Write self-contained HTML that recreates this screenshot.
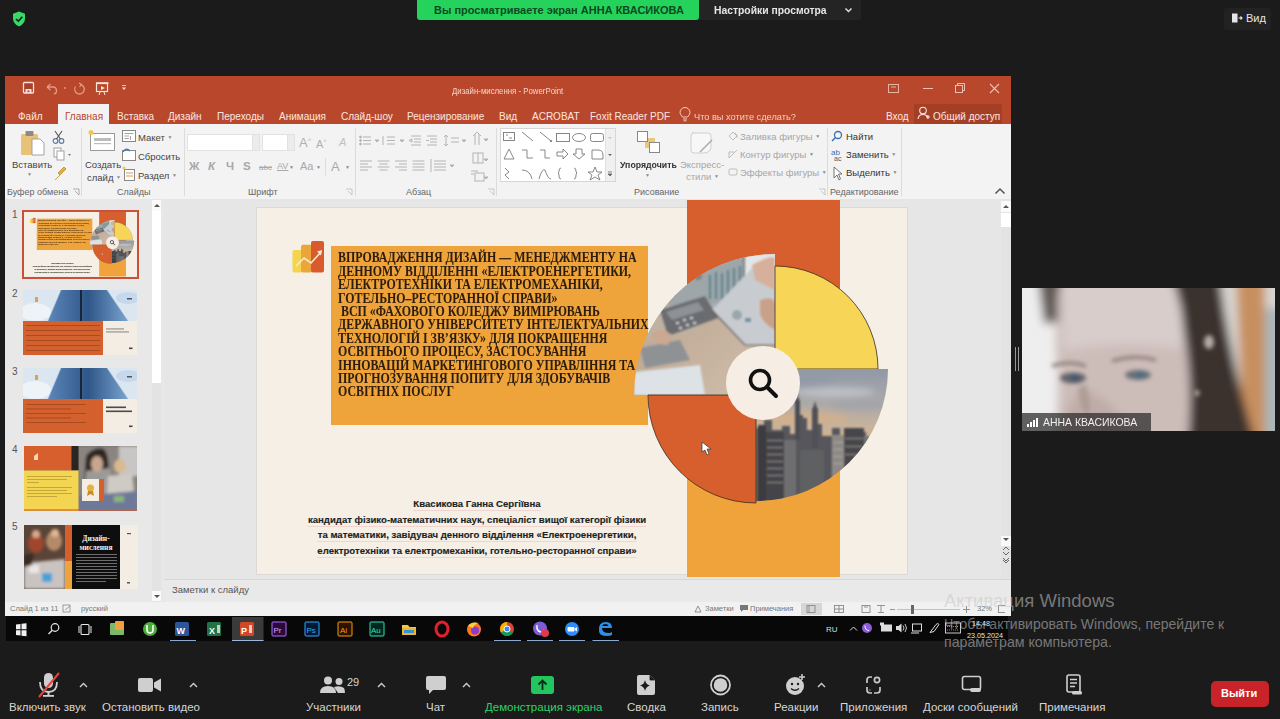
<!DOCTYPE html>
<html><head><meta charset="utf-8">
<style>
*{margin:0;padding:0;box-sizing:border-box}
html,body{width:1280px;height:719px;overflow:hidden;background:#1b1b1b;font-family:"Liberation Sans",sans-serif}
.a{position:absolute}
.t{position:absolute;white-space:nowrap;line-height:1}
</style></head><body>
<!-- ZOOM TOP -->
<div class="a" style="left:417px;top:0;width:282px;height:20px;background:#25d35c;border-radius:0 0 3px 3px"></div>
<div class="t" style="left:434px;top:5px;font-size:11px;font-weight:bold;color:#0b4a1f">Вы просматриваете экран АННА КВАСИКОВА</div>
<div class="a" style="left:699px;top:0;width:162px;height:20px;background:#242424;border-radius:0 0 3px 0"></div>
<div class="t" style="left:714px;top:5px;font-size:11px;font-weight:bold;color:#e6e6e6;transform:scaleX(0.94);transform-origin:0 0">Настройки просмотра</div>

<svg class="a" style="left:844px;top:7px" width="9" height="6"><path d="M1.5,1.5 L4.5,4.5 L7.5,1.5" fill="none" stroke="#ddd" stroke-width="1.5"/></svg>
<!-- PPT WINDOW -->
<div class="a" style="left:5px;top:76px;width:1006px;height:48px;background:#b9472b"></div>
<div class="a" style="left:5px;top:124px;width:1006px;height:75px;background:#f3f3f3"></div>
<div class="a" style="left:58px;top:104px;width:51px;height:21px;background:#f3f3f3"></div>

<!-- title bar -->
<svg class="a" style="left:20px;top:80px" width="115" height="17" viewBox="20 80 115 17">
<rect x="23.5" y="82.5" width="10" height="10.5" rx="1" fill="#a8402a" stroke="#f5e3dc" stroke-width="1.3"/><rect x="25.5" y="89" width="6" height="4" fill="#f5e3dc"/><rect x="27.5" y="90.5" width="2" height="1.6" fill="#a8402a"/>
<path d="M47,87 L50.5,84 M47,87 L50.5,90 M47,87 H53 Q56.5,87 56.5,91 Q56.5,93.5 54,94" fill="none" stroke="#e49a84" stroke-width="1.3"/>
<circle cx="65" cy="88" r="0.9" fill="#e49a84"/>
<path d="M80.5,84.5 A4.8,4.8 0 1 1 75.5,86.5" fill="none" stroke="#e49a84" stroke-width="1.3"/><path d="M79,83 L81.5,84.5 L79.5,87" fill="none" stroke="#e49a84" stroke-width="1.2"/>
<rect x="96.5" y="83.5" width="11" height="8" fill="none" stroke="#f5e3dc" stroke-width="1.2"/><path d="M96,83 H108.5" stroke="#f5e3dc" stroke-width="1.6"/><path d="M101,86 L105,88 L101,90 Z" fill="#f5e3dc"/><path d="M100,92 L99,95 M104,92 L105,95" stroke="#f5e3dc" stroke-width="1"/>
<path d="M122,87.5 H126 L124,90 Z" fill="#f5e3dc"/><path d="M122,85.5 H126" stroke="#f5e3dc" stroke-width="0.8"/>
</svg>
<div class="t" style="left:451.5px;top:86.5px;font-size:8.5px;color:#f3d5cb;transform:scaleX(0.92);transform-origin:0 0">Дизайн-мислення - PowerPoint</div>
<svg class="a" style="left:884px;top:82px" width="120" height="14" viewBox="0 0 120 14">
<rect x="4.5" y="2.5" width="10" height="8" fill="none" stroke="#e8b3a3" stroke-width="1"/><path d="M7,5 L12,5" stroke="#e8b3a3"/>
<path d="M39,6.5 L49,6.5" stroke="#eebfb0" stroke-width="1"/>
<rect x="71.5" y="3.5" width="7" height="7" fill="none" stroke="#eebfb0" stroke-width="1"/><path d="M73.5,3.5 V1.5 H80.5 V8.5 H78.5" fill="none" stroke="#eebfb0" stroke-width="1"/>
<path d="M106,2 L115,11 M115,2 L106,11" stroke="#eebfb0" stroke-width="1.1"/>
</svg>
<!-- tabs -->
<div class="t" style="left:18px;top:111.5px;font-size:10px;color:#fbe7e0">Файл</div>
<div class="t" style="left:65px;top:111.5px;font-size:10px;color:#b9472b">Главная</div>
<div class="t" style="left:117px;top:111.5px;font-size:10px;color:#fbe7e0">Вставка</div>
<div class="t" style="left:168px;top:111.5px;font-size:10px;color:#fbe7e0">Дизайн</div>
<div class="t" style="left:217px;top:111.5px;font-size:10px;color:#fbe7e0">Переходы</div>
<div class="t" style="left:279px;top:111.5px;font-size:10px;color:#fbe7e0">Анимация</div>
<div class="t" style="left:341px;top:111.5px;font-size:10px;color:#fbe7e0">Слайд-шоу</div>
<div class="t" style="left:407px;top:111.5px;font-size:10px;color:#fbe7e0">Рецензирование</div>
<div class="t" style="left:499px;top:111.5px;font-size:10px;color:#fbe7e0">Вид</div>
<div class="t" style="left:532px;top:111.5px;font-size:10px;color:#fbe7e0">ACROBAT</div>
<div class="t" style="left:590px;top:111.5px;font-size:10px;color:#fbe7e0">Foxit Reader PDF</div>
<svg class="a" style="left:679px;top:107px" width="12" height="15" viewBox="0 0 12 15"><path d="M3.5,10 Q1,7.5 1,5.5 A5,5 0 0 1 11,5.5 Q11,7.5 8.5,10 Z M4,12 H8 M4.5,13.8 H7.5" fill="none" stroke="#f2cdc2" stroke-width="1"/></svg>
<div class="t" style="left:694px;top:111.5px;font-size:9.6px;color:#f2cdc2;transform:scaleX(0.96);transform-origin:0 0">Что вы хотите сделать?</div>
<div class="t" style="left:886px;top:112px;font-size:10px;color:#fbe7e0">Вход</div>
<div class="a" style="left:914px;top:104px;width:88px;height:20px;background:#a43f26"></div>
<svg class="a" style="left:917px;top:106px" width="13" height="14" viewBox="0 0 13 14"><circle cx="6" cy="4.5" r="3.3" fill="none" stroke="#fbe7e0" stroke-width="1.1"/><path d="M1,13 Q1.5,8.5 6,8.5 Q10.5,8.5 11,13 M9,11 H13 M11,9 V13" fill="none" stroke="#fbe7e0" stroke-width="1.1"/></svg>
<div class="t" style="left:933px;top:111.5px;font-size:10px;color:#fbe7e0">Общий доступ</div>

<!-- ribbon -->
<div class="a" style="left:81px;top:128px;width:1px;height:68px;background:#dcdcdc"></div>
<div class="a" style="left:184px;top:128px;width:1px;height:68px;background:#dcdcdc"></div>
<div class="a" style="left:355px;top:128px;width:1px;height:68px;background:#dcdcdc"></div>
<div class="a" style="left:496px;top:128px;width:1px;height:68px;background:#dcdcdc"></div>
<div class="a" style="left:827px;top:128px;width:1px;height:68px;background:#dcdcdc"></div>
<div class="a" style="left:901px;top:128px;width:1px;height:68px;background:#dcdcdc"></div>
<!-- clipboard -->
<svg class="a" style="left:19px;top:129px" width="28" height="28" viewBox="0 0 28 28">
<rect x="2" y="5" width="17" height="21" rx="1.5" fill="#e9c27a"/><rect x="6.5" y="2" width="8" height="5" rx="1" fill="#8b8b8b"/><path d="M13,10 H21 L25,14 V26 H13 Z" fill="#fff" stroke="#9a9a9a" stroke-width="0.9"/>
</svg>
<div class="t" style="left:12px;top:160px;font-size:9.5px;color:#444">Вставить</div>
<div class="t" style="left:27px;top:172px;font-size:7px;color:#666"><span style="font-size:5px;vertical-align:2px;color:#8a8a8a">▼</span></div>
<svg class="a" style="left:51px;top:129px" width="20" height="55" viewBox="0 0 20 55">
<circle cx="4.5" cy="12" r="2.3" fill="none" stroke="#5a7fa8" stroke-width="1.2"/><circle cx="10.5" cy="12" r="2.3" fill="none" stroke="#5a7fa8" stroke-width="1.2"/><path d="M5.5,10 L11,2 M9.5,10 L4,2" stroke="#555" stroke-width="1.1"/>
<rect x="3" y="19" width="7" height="9" fill="#fff" stroke="#999" stroke-width="0.9"/><rect x="6" y="22" width="7" height="9" fill="#fff" stroke="#999" stroke-width="0.9"/><path d="M17,25 L20,25 L18.5,27 Z" fill="#777"/>
<path d="M4,51 L9,46 M7,44 L13,38 L15,40 L9,46 Z" fill="#e2b04a" stroke="#c08a2a" stroke-width="0.8"/>
</svg>
<div class="t" style="left:7px;top:188px;font-size:9px;color:#666">Буфер обмена</div>
<svg class="a" style="left:72px;top:188px" width="8" height="8"><path d="M1,1 H7 V7 M3,3 L7,7" fill="none" stroke="#999" stroke-width="0.8"/></svg>
<!-- slides -->
<svg class="a" style="left:87px;top:129px" width="30" height="24" viewBox="0 0 30 24">
<rect x="3.5" y="4.5" width="24" height="17" fill="#fff" stroke="#9a9a9a"/><rect x="7" y="9" width="17" height="3" fill="#bdbdbd"/><rect x="7" y="14" width="17" height="1.2" fill="#bdbdbd"/><circle cx="4" cy="3.5" r="2.5" fill="#f2c94c"/>
</svg>
<div class="t" style="left:85px;top:160px;font-size:9.5px;color:#444">Создать</div>
<div class="t" style="left:87px;top:173px;font-size:9.5px;color:#444">слайд <span style="font-size:5px;vertical-align:2px;color:#8a8a8a">▼</span></div>
<svg class="a" style="left:122px;top:130px" width="14" height="52" viewBox="0 0 14 52">
<rect x="0.5" y="0.5" width="13" height="11" fill="#fff" stroke="#888"/><path d="M2.5,3.5 H11.5 M2.5,6 H7 M2.5,8.5 H7 M8.5,6 V10" stroke="#999" stroke-width="0.9"/>
<rect x="0.5" y="20.5" width="13" height="10" fill="#fff" stroke="#888"/><path d="M1,22 Q4,17 8,21" fill="none" stroke="#3a7bc8" stroke-width="1.4"/>
<rect x="2.5" y="39.5" width="10" height="11" fill="#fff" stroke="#888"/><path d="M4,43 H11 M4,46 H11" stroke="#d98a3a" stroke-width="0.9"/><circle cx="2" cy="38" r="1.5" fill="#f2c94c"/>
</svg>
<div class="t" style="left:138px;top:133px;font-size:9.5px;color:#444">Макет <span style="font-size:5px;vertical-align:2px;color:#8a8a8a">▼</span></div>
<div class="t" style="left:138px;top:152px;font-size:9.5px;color:#444">Сбросить</div>
<div class="t" style="left:138px;top:171px;font-size:9.5px;color:#444">Раздел <span style="font-size:5px;vertical-align:2px;color:#8a8a8a">▼</span></div>
<div class="t" style="left:117px;top:188px;font-size:9px;color:#666">Слайды</div>
<!-- font -->
<div class="a" style="left:187px;top:134px;width:66px;height:17px;background:#fff;border:1px solid #e2e2e2"></div>
<div class="a" style="left:252px;top:134px;width:8px;height:17px;background:#ececec;border:1px solid #e2e2e2"></div>
<div class="a" style="left:262px;top:134px;width:26px;height:17px;background:#fff;border:1px solid #e2e2e2"></div>
<div class="a" style="left:287px;top:134px;width:8px;height:17px;background:#ececec;border:1px solid #e2e2e2"></div>
<div class="t" style="left:299px;top:136px;font-size:13px;color:#b0b0b0">A<sup style="font-size:6px">˄</sup></div>
<div class="t" style="left:316px;top:138px;font-size:11px;color:#b0b0b0">A<sup style="font-size:6px">˅</sup></div>
<div class="t" style="left:339px;top:137px;font-size:11px;color:#c0c0c0;font-style:italic">A</div>
<div class="t" style="left:189px;top:161px;font-size:11.5px;font-weight:bold;color:#a8a8a8">Ж</div>
<div class="t" style="left:208px;top:161px;font-size:11.5px;font-weight:bold;font-style:italic;color:#a8a8a8">К</div>
<div class="t" style="left:226px;top:161px;font-size:11.5px;font-weight:bold;color:#a8a8a8">Ч</div>
<div class="t" style="left:243px;top:161px;font-size:11.5px;font-weight:bold;color:#a8a8a8">S</div>
<div class="t" style="left:259px;top:164px;font-size:8px;color:#a8a8a8;text-decoration:line-through">abc</div>
<div class="t" style="left:277px;top:162px;font-size:9px;color:#a8a8a8;text-decoration:underline">AV</div>
<div class="t" style="left:289px;top:165px;font-size:6px;color:#b8b8b8"><span style="font-size:5px;vertical-align:2px;color:#8a8a8a">▼</span></div>
<div class="t" style="left:300px;top:161px;font-size:11px;color:#a8a8a8">Aa</div>
<div class="t" style="left:316px;top:165px;font-size:6px;color:#b8b8b8"><span style="font-size:5px;vertical-align:2px;color:#8a8a8a">▼</span></div>
<div class="a" style="left:325px;top:158px;width:1px;height:18px;background:#ddd"></div>
<div class="t" style="left:331px;top:160px;font-size:13px;color:#a8a8a8">A</div>
<div class="t" style="left:345px;top:165px;font-size:6px;color:#b8b8b8"><span style="font-size:5px;vertical-align:2px;color:#8a8a8a">▼</span></div>
<div class="t" style="left:248px;top:188px;font-size:9px;color:#666">Шрифт</div>
<svg class="a" style="left:345px;top:188px" width="8" height="8"><path d="M1,1 H7 V7 M3,3 L7,7" fill="none" stroke="#bbb" stroke-width="0.8"/></svg>
<!-- paragraph -->
<svg class="a" style="left:358px;top:131px" width="138" height="58" viewBox="0 0 138 58">
<g stroke="#b4b4b4" stroke-width="1" fill="none">
<path d="M5,6 H13 M5,9.5 H13 M5,13 H13"/><circle cx="2.5" cy="6" r="0.9" fill="#b4b4b4"/><circle cx="2.5" cy="9.5" r="0.9" fill="#b4b4b4"/><circle cx="2.5" cy="13" r="0.9" fill="#b4b4b4"/>
<path d="M29,6 H37 M29,9.5 H37 M29,13 H37 M25,5 V14"/>
<path d="M53,5 H63 M56,8 H63 M56,11 H63 M53,14 H63 M51,9.5 L54,8 L54,11 Z"/>
<path d="M69,5 H79 M72,8 H79 M72,11 H79 M69,14 H79 M68,9.5 L71,9.5"/>
<path d="M88,4 V15 M86,6 L88,4 L90,6 M86,13 L88,15 L90,13 M93,7 H101 M93,11 H101"/>
<path d="M117,3 V14 M121,3 V14 M115,5 L119,1 L123,5"/><path d="M126,8 L130,8 L128,10 Z" fill="#b4b4b4"/><path d="M17,9 L21,9 L19,11 Z M42,9 L46,9 L44,11 Z M104,9 L108,9 L106,11 Z M126,28 L130,28 L128,30 Z M126,46 L130,46 L128,48 Z" fill="#b4b4b4"/>
<rect x="115" y="22" width="10" height="10"/><path d="M120,22 V32"/>
<rect x="117" y="42" width="9" height="8"/><path d="M113,40 H120 M113,43 H116"/>
<path d="M2,30 H14 M2,33 H10 M2,36 H14 M2,39 H10"/>
<path d="M19.5,30 H31.5 M21.5,33 H29.5 M19.5,36 H31.5 M21.5,39 H29.5"/>
<path d="M37,30 H49 M41,33 H49 M37,36 H49 M41,39 H49"/>
<path d="M54.5,30 H66.5 M54.5,33 H66.5 M54.5,36 H66.5 M54.5,39 H66.5"/>
<path d="M76,30 H88 M76,33 H88 M76,36 H88 M76,39 H88 M73,28 V41" /><path d="M92,34 L96,34 L94,36 Z" fill="#b4b4b4"/>
</g>
</svg>
<div class="t" style="left:406px;top:188px;font-size:9px;color:#666">Абзац</div>
<svg class="a" style="left:487px;top:188px" width="8" height="8"><path d="M1,1 H7 V7 M3,3 L7,7" fill="none" stroke="#bbb" stroke-width="0.8"/></svg>
<!-- drawing -->
<div class="a" style="left:500px;top:128px;width:116px;height:54px;background:#fff;border:1px solid #d6d6d6"></div>
<div class="a" style="left:605px;top:129px;width:10px;height:52px;background:#f0f0f0;border-left:1px solid #e0e0e0"></div>
<svg class="a" style="left:500px;top:128px" width="116" height="54" viewBox="0 0 116 54">
<g stroke="#7a7a7a" stroke-width="0.9" fill="none">
<rect x="3.5" y="4.5" width="11" height="8"/><path d="M6,7 H8 M9,10 H12"/>
<path d="M22,4 L33,13"/><path d="M40,4 L51,13"/><circle cx="51" cy="13" r="0.8" fill="#7a7a7a"/>
<rect x="56.5" y="5.5" width="13" height="8"/><ellipse cx="79" cy="9.5" rx="6.5" ry="4"/><rect x="90.5" y="5.5" width="13" height="8" rx="2"/>
<path d="M4,31 L9,21 L14,31 Z"/><path d="M22,22 H27 V30 H33"/><path d="M40,22 H45 V30 H50"/>
<path d="M57,24 H63 V21 L68,26 L63,31 V28 H57 Z"/><path d="M76,21 H82 V26 H85 L79,31 L73,26 H76 Z"/><path d="M92,22 H98 Q103,22 103,27 V31 H92 Z"/>
<path d="M5,40 L9,44 L5,47 L9,51"/><path d="M22,42 Q30,42 32,51"/><path d="M39,51 Q42,40 45,42 Q48,51 51,51"/>
<path d="M61,40 Q59,40 59,43 V44 L58,45 L59,46 V48 Q59,51 61,51"/><path d="M74,40 Q76,40 76,43 V44 L77,45 L76,46 V48 Q76,51 74,51"/>
<path d="M95,39 L97,44 L102,44 L98,47 L100,52 L95,49 L90,52 L92,47 L88,44 L93,44 Z"/>
</g>
<path d="M108,9 L112,9 L110,11 Z" fill="#c8c8c8"/><path d="M108,26 L112,26 L110,28 Z" fill="#666"/><path d="M108,44 H112 M108,46 L112,46 L110,48 Z" stroke="#666" stroke-width="0.8" fill="#666"/>
</svg>
<svg class="a" style="left:636px;top:130px" width="26" height="24" viewBox="0 0 26 24"><rect x="9" y="8" width="10" height="10" fill="#e8c97a"/><rect x="1.5" y="1.5" width="10" height="10" fill="#fff" stroke="#888"/><rect x="13.5" y="12.5" width="10" height="10" fill="#fff" stroke="#888"/></svg>
<div class="t" style="left:620px;top:160px;font-size:9.5px;color:#333;font-weight:bold;transform:scaleX(0.92);transform-origin:0 0">Упорядочить</div>
<div class="t" style="left:645px;top:173px;font-size:6px;color:#666"><span style="font-size:5px;vertical-align:2px;color:#8a8a8a">▼</span></div>
<svg class="a" style="left:688px;top:130px" width="26" height="26" viewBox="0 0 26 26"><path d="M4,3 H20 Q23,3 23,6 V16 Q23,23 16,23 H6 Q3,23 3,20 V6 Q3,3 6,3" fill="#f7f7f7" stroke="#cfcfcf"/><path d="M12,22 L24,10" stroke="#aaa" stroke-width="1.5"/></svg>
<div class="t" style="left:680px;top:160px;font-size:9.5px;color:#a6a6a6">Экспресс-</div>
<div class="t" style="left:686px;top:172px;font-size:9.5px;color:#a6a6a6">стили <span style="font-size:5px;vertical-align:2px;color:#8a8a8a">▼</span></div>
<svg class="a" style="left:727px;top:130px" width="12" height="48" viewBox="0 0 12 48"><g fill="none" stroke="#b8b8b8" stroke-width="0.9"><path d="M2,6 L6,2 L10,6 L6,10 Z M8,3 Q11,5 10,8"/><path d="M2,28 L10,20 M2,28 V22 H7"/><rect x="2" y="39" width="8" height="6" rx="1"/></g></svg>
<div class="t" style="left:740px;top:132px;font-size:9.5px;color:#a6a6a6">Заливка фигуры <span style="font-size:5px;vertical-align:2px;color:#8a8a8a">▼</span></div>
<div class="t" style="left:740px;top:149.5px;font-size:9.5px;color:#a6a6a6">Контур фигуры <span style="font-size:5px;vertical-align:2px;color:#8a8a8a">▼</span></div>
<div class="t" style="left:740px;top:167.5px;font-size:9.5px;color:#a6a6a6">Эффекты фигуры <span style="font-size:5px;vertical-align:2px;color:#8a8a8a">▼</span></div>
<div class="t" style="left:634px;top:188px;font-size:9px;color:#666">Рисование</div>
<svg class="a" style="left:818px;top:188px" width="8" height="8"><path d="M1,1 H7 V7 M3,3 L7,7" fill="none" stroke="#bbb" stroke-width="0.8"/></svg>
<!-- editing -->
<svg class="a" style="left:831px;top:130px" width="14" height="52" viewBox="0 0 14 52"><circle cx="7" cy="5" r="3.5" fill="none" stroke="#3a6fb0" stroke-width="1.3"/><path d="M4.5,7.5 L1,11" stroke="#3a6fb0" stroke-width="1.5"/>
<text x="0" y="25" font-size="8" fill="#3a6fb0" font-family="Liberation Sans">ab</text><text x="3" y="31" font-size="7" fill="#555" font-family="Liberation Sans">ac</text>
<path d="M3,37 V48 L6,45 L8,50 L9.5,49 L7.5,44 H11 Z" fill="#fff" stroke="#666" stroke-width="0.9"/></svg>
<div class="t" style="left:846px;top:132px;font-size:9.5px;color:#333">Найти</div>
<div class="t" style="left:846px;top:149.5px;font-size:9.5px;color:#333">Заменить <span style="font-size:5px;vertical-align:2px;color:#8a8a8a">▼</span></div>
<div class="t" style="left:846px;top:167.5px;font-size:9.5px;color:#333">Выделить <span style="font-size:5px;vertical-align:2px;color:#8a8a8a">▼</span></div>
<div class="t" style="left:830px;top:188px;font-size:9px;color:#666">Редактирование</div>
<svg class="a" style="left:994px;top:187px" width="12" height="8"><path d="M1.5,6.5 L6,2 L10.5,6.5" fill="none" stroke="#555" stroke-width="1.5"/></svg>
<!-- slide panel -->
<div class="a" style="left:5px;top:199px;width:159px;height:403px;background:#e8e8e8"></div>
<div class="a" style="left:164px;top:199px;width:847px;height:380px;background:#e6e6e6"></div>
<div class="a" style="left:164px;top:579px;width:847px;height:23px;background:#e9e9e9;border-top:1px solid #d6d6d6"></div>
<div class="a" style="left:5px;top:602px;width:1006px;height:14px;background:#f1f1f1"></div>

<!-- slide panel contents -->
<div class="a" style="left:152px;top:199px;width:9px;height:403px;background:#e3e3e3"></div>
<div class="a" style="left:152px;top:200px;width:9px;height:11px;background:#fafafa"></div>
<svg class="a" style="left:153px;top:203px" width="8" height="5"><path d="M1,4 L4,1 L7,4 Z" fill="#555"/></svg>
<div class="a" style="left:152px;top:211px;width:9px;height:172px;background:#fff"></div>
<div class="a" style="left:152px;top:591px;width:9px;height:10px;background:#fafafa"></div>
<svg class="a" style="left:153px;top:594px" width="8" height="5"><path d="M1,1 L4,4 L7,1 Z" fill="#555"/></svg>
<div class="t" style="left:12px;top:210px;font-size:10px;color:#555">1</div>
<div class="t" style="left:12px;top:289px;font-size:10px;color:#555">2</div>
<div class="t" style="left:12px;top:367px;font-size:10px;color:#555">3</div>
<div class="t" style="left:12px;top:445px;font-size:10px;color:#555">4</div>
<div class="t" style="left:12px;top:522px;font-size:10px;color:#555">5</div>
<!-- thumb1 -->
<div class="a" style="left:22px;top:210px;width:117px;height:69px;border:2px solid #c9503a;background:#f5ede2;overflow:hidden">
<div class="a" style="left:0;top:0;width:649px;height:369px;transform:scale(0.1752);transform-origin:0 0;overflow:hidden">
<div class="a" style="left:-258px;top:-208px;width:1280px;height:719px">
<!-- slide -->
<div class="a" style="left:257px;top:208px;width:650px;height:366px;background:#f5efe6;box-shadow:0 0 0 1px #dcdad6"></div>

<!-- slide content -->
<svg class="a" style="left:290px;top:240px" width="36" height="34" viewBox="0 0 36 34">
<rect x="2.5" y="10" width="10" height="22.5" rx="2" fill="#f3d44c"/>
<rect x="11" y="4.8" width="11" height="27.7" rx="2" fill="#eba53b"/>
<rect x="21" y="1" width="13" height="31.5" rx="2" fill="#d95a2c"/>
<polyline points="6,26 14,18 21,23 31,12" fill="none" stroke="#fbe9d3" stroke-width="1.6"/>
<polygon points="32,10 27,11.5 31,15.5" fill="#fbe9d3"/>
</svg>
<div class="a" style="left:331px;top:246px;width:317px;height:179px;background:#eea43b"></div>
<div class="a" id="t_ttl" style="white-space:nowrap;left:338px;top:251.4px;width:340px;font-family:'Liberation Serif',serif;font-weight:bold;font-size:13.6px;line-height:13.4px;color:#2e1d0e;-webkit-text-stroke:0.05px #2e1d0e;transform-origin:0 0;transform:scaleX(0.876)">ВПРОВАДЖЕННЯ ДИЗАЙН — МЕНЕДЖМЕНТУ НА<br>ДЕННОМУ ВІДДІЛЕННІ «ЕЛЕКТРОЕНЕРГЕТИКИ,<br>ЕЛЕКТРОТЕХНІКИ ТА ЕЛЕКТРОМЕХАНІКИ,<br>ГОТЕЛЬНО–РЕСТОРАННОЇ СПРАВИ»<br>&nbsp;ВСП «ФАХОВОГО КОЛЕДЖУ ВИМІРЮВАНЬ<br>ДЕРЖАВНОГО УНІВЕРСИТЕТУ ІНТЕЛЕКТУАЛЬНИХ<br>ТЕХНОЛОГІЙ І ЗВ’ЯЗКУ» ДЛЯ ПОКРАЩЕННЯ<br>ОСВІТНЬОГО ПРОЦЕСУ, ЗАСТОСУВАННЯ<br>ІННОВАЦІЙ МАРКЕТИНГОВОГО УПРАВЛІННЯ ТА<br>ПРОГНОЗУВАННЯ ПОПИТУ ДЛЯ ЗДОБУВАЧІВ<br>ОСВІТНІХ ПОСЛУГ</div>
<div class="a" style="left:687px;top:200px;width:153px;height:190px;background:#d65f2d"></div>
<div class="a" style="left:687px;top:390px;width:153px;height:187px;background:#f0a33b"></div>
<svg class="a" style="left:620px;top:240px" width="280" height="275" viewBox="620 240 280 275">
<defs>
<clipPath id="t_cq1"><path d="M775,395 L634,395 A141,141 0 0 1 775,254 Z"/></clipPath>
<clipPath id="t_cq3"><path d="M756,369 L888,369 A132,132 0 0 1 756,501 Z"/></clipPath>
<filter id="t_sb"><feGaussianBlur stdDeviation="1.2"/></filter>
<filter id="t_sb2"><feGaussianBlur stdDeviation="3"/></filter>
<linearGradient id="t_sky" x1="0" y1="0" x2="0" y2="1">
<stop offset="0" stop-color="#8d97a6"/><stop offset="0.25" stop-color="#a9a8aa"/><stop offset="0.45" stop-color="#c9b39c"/><stop offset="0.55" stop-color="#d7ae82"/><stop offset="1" stop-color="#c9a27a"/>
</linearGradient>
<linearGradient id="t_tbl" x1="0" y1="0" x2="1" y2="1">
<stop offset="0" stop-color="#b59e88"/><stop offset="1" stop-color="#d2c0ae"/>
</linearGradient>
</defs>
<g clip-path="url(#t_cq1)">
<rect x="630" y="250" width="150" height="150" fill="url(#t_tbl)"/>
<g filter="url(#t_sb2)">
<rect x="630" y="250" width="150" height="60" fill="#a7adb0"/>
<rect x="740" y="250" width="40" height="40" fill="#e4e5e8"/>
<path d="M630,300 L690,290 L700,330 L630,345 Z" fill="#c0b2a2"/>
</g>
<g filter="url(#t_sb)">
<path d="M662,262 L744,254 L744,302 L668,306 Z" fill="#9ea6a9"/><path d="M744,254 V302" stroke="#333" stroke-width="1"/>
<g stroke="#3f7f8a" stroke-width="1.8"><path d="M710,299 V275 M716,299 V272 M722,299 V273 M728,299 V270 M734,299 V268 M740,299 V266"/></g>
<circle cx="698" cy="276" r="4" fill="#7a8488"/>
<path d="M660,310 L705,296 L718,318 L668,336 Z" fill="#6a6c70"/>
<path d="M666,312 L698,302 L704,310 L672,320 Z" fill="#8e9296"/>
<g fill="#cfd2d4"><rect x="676" y="322" width="3" height="2"/><rect x="683" y="319" width="3" height="2"/><rect x="690" y="317" width="3" height="2"/><rect x="679" y="327" width="3" height="2"/><rect x="686" y="324" width="3" height="2"/><rect x="693" y="322" width="3" height="2"/></g>
<path d="M712,310 L752,268 L775,266 L775,345 L745,345 Z" fill="#c8ccd0"/>
<path d="M712,310 L745,345 L775,345" fill="none" stroke="#555" stroke-width="1.2"/>
<circle cx="737" cy="315" r="5" fill="#9aa6aa"/><rect x="745" y="318" width="6" height="4" fill="#7090a0"/>
<path d="M752,265 Q770,255 775,258 V290 Q765,285 755,280 Z" fill="#d6b09a"/>
<path d="M760,300 Q775,295 775,305 V330 Q765,325 760,315 Z" fill="#c9a088"/>
<path d="M640,348 L680,340 L690,360 L645,368 Z" fill="#8f9295"/>
<path d="M634,372 L700,365 L705,395 L634,395 Z" fill="#dde2e6"/>
<path d="M650,336 Q660,325 672,335 L668,345 Q655,345 650,336 Z" fill="#caa892"/>
</g>
</g>
<path d="M775,369 L775,266 A103,103 0 0 1 878,369 Z" fill="#f7d557" stroke="#3a2a1a" stroke-width="0.8"/>
<g clip-path="url(#t_cq3)">
<rect x="750" y="365" width="140" height="140" fill="url(#t_sky)"/>
<g filter="url(#t_sb2)"><ellipse cx="830" cy="395" rx="40" ry="6" fill="#c7c9cf" opacity="0.7"/><ellipse cx="800" cy="385" rx="30" ry="8" fill="#9aa0ac" opacity="0.6"/></g>
<g filter="url(#t_sb)">
<path d="M756,430 H770 V425 H780 V432 H790 V420 H800 V430 H812 V428 H822 V440 H835 V435 H850 V432 H870 V440 H890 V505 H756 Z" fill="#55565a"/>
<rect x="813" y="418" width="6" height="40" fill="#4a4b50"/><rect x="820" y="422" width="5" height="30" fill="#5c5d60"/>
<rect x="760" y="435" width="22" height="70" fill="#3e3f44"/>
<rect x="786" y="445" width="14" height="60" fill="#66676a"/>
<rect x="842" y="436" width="14" height="50" fill="#8a8784"/><rect x="856" y="432" width="18" height="50" fill="#4b4c50"/>
<rect x="800" y="460" width="30" height="45" fill="#6e6e70"/>
<g fill="#b9b3a8" opacity="0.7"><rect x="763" y="442" width="16" height="1"/><rect x="763" y="450" width="16" height="1"/><rect x="763" y="458" width="16" height="1"/><rect x="763" y="466" width="16" height="1"/><rect x="763" y="474" width="16" height="1"/><rect x="844" y="445" width="10" height="1"/><rect x="844" y="452" width="10" height="1"/><rect x="844" y="459" width="10" height="1"/></g>
</g>
</g>
<path d="M756,395 L756,503 A108,108 0 0 1 648,395 Z" fill="#d65f2d" stroke="#3a2a1a" stroke-width="0.8"/>
<circle cx="763" cy="383" r="37" fill="#f6eee4"/>
<circle cx="760" cy="380" r="9.5" fill="none" stroke="#111" stroke-width="3.6"/>
<line x1="767" y1="387" x2="776" y2="396" stroke="#111" stroke-width="4" stroke-linecap="round"/>
<path d="M702,442 L702,452 L705,450 L707,455 L709,454 L707,449 L711,449 Z" fill="#fff" stroke="#333" stroke-width="0.7"/>
</svg>
<div class="a" style="left:260px;top:496px;width:434px;text-align:center;font-family:'Liberation Sans',sans-serif;font-weight:bold;font-size:9.6px;line-height:15.6px;color:#1f1f1f;-webkit-text-stroke:0.15px #1f1f1f;text-decoration:underline;text-decoration-color:rgba(230,150,150,0.3);text-underline-offset:2.5px;text-decoration-thickness:1px">Квасикова Ганна Сергіївна<br>кандидат фізико-математичних наук, спеціаліст вищої категорії фізики<br>та математики, завідувач денного відділення «Електроенергетики,<br>електротехніки та електромеханіки, готельно-ресторанної справи»</div>
</div></div></div>
<!-- thumb2 --><svg class="a" style="left:23px;top:290px" width="114" height="65" viewBox="0 0 114 65">
<defs><linearGradient id="gl2" x1="0" y1="0" x2="1" y2="0"><stop offset="0" stop-color="#5d87b9"/><stop offset="0.5" stop-color="#2f5688"/><stop offset="1" stop-color="#7aa3cf"/></linearGradient></defs>
<rect width="114" height="65" fill="#f4ede4"/>
<rect width="114" height="31" fill="#dbe6f1"/>
<ellipse cx="12" cy="22" rx="16" ry="9" fill="#eef3f8"/><ellipse cx="105" cy="8" rx="12" ry="6" fill="#c6d8ec"/>
<path d="M25,31 L38,0 H84 L105,31 Z" fill="url(#gl2)"/>
<path d="M38,0 L25,31 M84,0 L105,31" stroke="#9fbbd8" stroke-width="0.6"/>
<rect x="57" y="0" width="2" height="31" fill="#182638"/>
<rect x="12" y="7" width="3" height="5" fill="#e3a04a"/>
<rect x="104" y="8" width="5" height="1.5" fill="#555"/>
<rect x="0" y="31" width="80" height="34" fill="#d4602e"/>
<rect x="3" y="35" width="74" height="0.9" fill="#7a3418" opacity="0.55"/><rect x="3" y="40" width="74" height="0.9" fill="#7a3418" opacity="0.55"/><rect x="3" y="45" width="74" height="0.9" fill="#7a3418" opacity="0.55"/><rect x="3" y="50" width="74" height="0.9" fill="#7a3418" opacity="0.55"/><rect x="3" y="55" width="74" height="0.9" fill="#7a3418" opacity="0.55"/><rect x="3" y="60" width="74" height="0.9" fill="#7a3418" opacity="0.55"/><rect x="83" y="38.5" width="18" height="0.9" fill="#777"/><rect x="83" y="41.5" width="23" height="0.9" fill="#777"/><rect x="106" y="57.5" width="3.5" height="1.6" fill="#444"/>
</svg>
<!-- thumb3 --><svg class="a" style="left:23px;top:368px" width="114" height="65" viewBox="0 0 114 65">
<defs><linearGradient id="gl3" x1="0" y1="0" x2="1" y2="0"><stop offset="0" stop-color="#5d87b9"/><stop offset="0.5" stop-color="#2f5688"/><stop offset="1" stop-color="#7aa3cf"/></linearGradient></defs>
<rect width="114" height="65" fill="#f4ede4"/>
<rect width="114" height="31" fill="#dbe6f1"/>
<ellipse cx="12" cy="22" rx="16" ry="9" fill="#eef3f8"/><ellipse cx="105" cy="8" rx="12" ry="6" fill="#c6d8ec"/>
<path d="M25,31 L38,0 H84 L105,31 Z" fill="url(#gl3)"/>
<path d="M38,0 L25,31 M84,0 L105,31" stroke="#9fbbd8" stroke-width="0.6"/>
<rect x="57" y="0" width="2" height="31" fill="#182638"/>
<rect x="12" y="7" width="3" height="5" fill="#e3a04a"/>
<rect x="104" y="8" width="5" height="1.5" fill="#555"/>
<rect x="0" y="31" width="80" height="34" fill="#d4602e"/>
<rect x="3" y="36.0" width="60" height="0.9" fill="#7a3418" opacity="0.55"/><rect x="3" y="40.5" width="45" height="0.9" fill="#7a3418" opacity="0.55"/><rect x="3" y="45.0" width="60" height="0.9" fill="#7a3418" opacity="0.55"/><rect x="3" y="49.5" width="45" height="0.9" fill="#7a3418" opacity="0.55"/><rect x="3" y="54.0" width="60" height="0.9" fill="#7a3418" opacity="0.55"/><rect x="83" y="38.5" width="20" height="1.6" fill="#4a4a4a"/><rect x="83" y="42.5" width="26" height="1.6" fill="#4a4a4a"/><rect x="106" y="57.5" width="3.5" height="1.6" fill="#444"/>
</svg>
<!-- thumb4 -->
<svg class="a" style="left:24px;top:446px" width="113" height="65" viewBox="0 0 113 65">
<defs><filter id="tb4"><feGaussianBlur stdDeviation="1.6"/></filter></defs>
<rect width="113" height="65" fill="#77716c"/>
<g filter="url(#tb4)">
<rect x="54" y="0" width="60" height="65" fill="#8a8580"/>
<rect x="95" y="0" width="20" height="30" fill="#c8c6c4"/>
<path d="M62,10 Q70,0 80,3 Q86,10 84,30 L70,40 L60,35 Z" fill="#2e2624"/>
<path d="M62,25 L86,22 L88,65 L58,65 Z" fill="#9c9a98"/>
<ellipse cx="73" cy="18" rx="6" ry="8" fill="#c9a690"/>
<ellipse cx="96" cy="20" rx="6" ry="7" fill="#d9b98f"/>
<path d="M84,30 L108,28 L112,65 L82,65 Z" fill="#cfcac4"/>
<path d="M55,50 L113,45 V65 H55 Z" fill="#6e7898"/>
<rect x="90" y="50" width="10" height="6" fill="#8cb57a"/>
</g>
<rect x="0" y="0" width="47.5" height="24.5" fill="#d65f2d"/>
<rect x="47.5" y="0" width="7" height="24.5" fill="#2a2522"/>
<rect x="0" y="24.5" width="54.5" height="40.5" fill="#f3d551"/>
<path d="M10,10 L14,7 V14 H10 Z" fill="#f7d6b0"/>
<g fill="#8a6a20" opacity="0.55"><rect x="3" y="30" width="45" height="0.8"/><rect x="3" y="33" width="40" height="0.8"/><rect x="3" y="36" width="12" height="0.8"/><rect x="3" y="41" width="45" height="0.8"/><rect x="3" y="44" width="40" height="0.8"/><rect x="3" y="47" width="45" height="0.8"/><rect x="3" y="50" width="30" height="0.8"/></g>
<rect x="0" y="63" width="113" height="2" fill="#d65f2d" opacity="0.6"/>
<rect x="58" y="33" width="17" height="22" fill="#f4ede4"/><rect x="75" y="33" width="5" height="22" fill="#d65f2d"/>
<circle cx="66.5" cy="42" r="3.5" fill="#e8b13a"/><path d="M64,45 L63,50 L66.5,48 L70,50 L69,45" fill="#c98a2a"/>
</svg>
<!-- thumb5 -->
<svg class="a" style="left:24px;top:525px" width="114" height="64" viewBox="0 0 114 64">
<defs><filter id="tb5"><feGaussianBlur stdDeviation="1.6"/></filter></defs>
<rect width="114" height="64" fill="#f4ede4"/>
<rect width="41" height="64" fill="#5a4438"/>
<g filter="url(#tb5)">
<ellipse cx="12" cy="18" rx="8" ry="10" fill="#a0442e"/>
<ellipse cx="30" cy="16" rx="8" ry="10" fill="#b58a6a"/>
<circle cx="12" cy="9" r="4" fill="#d9a888"/><circle cx="31" cy="8" r="4" fill="#e0b890"/>
<path d="M0,38 L41,34 V64 H0 Z" fill="#c9c4c2"/>
<rect x="18" y="48" width="10" height="9" fill="#4aa0d8"/>
<rect x="5" y="40" width="10" height="8" fill="#e9e6e4"/>
<path d="M0,30 L10,28 L8,40 L0,42 Z" fill="#3b2a24"/>
</g>
<rect x="41" y="0" width="7" height="36" fill="#d65f2d"/><rect x="41" y="36" width="7" height="28" fill="#f0a33b"/>
<rect x="48" y="0" width="48" height="64" fill="#0e0e0e"/>
<text x="72" y="16" font-size="7.5" font-weight="bold" fill="#eee" font-family="Liberation Serif" text-anchor="middle">Дизайн-</text>
<text x="72" y="25" font-size="7.5" font-weight="bold" fill="#eee" font-family="Liberation Serif" text-anchor="middle">мислення</text>
<g fill="#cfcfcf" opacity="0.55"><rect x="52" y="29" width="41" height="0.9"/><rect x="52" y="32" width="41" height="0.9"/><rect x="52" y="35" width="41" height="0.9"/><rect x="52" y="38" width="41" height="0.9"/><rect x="52" y="41" width="41" height="0.9"/><rect x="52" y="44" width="41" height="0.9"/><rect x="52" y="47" width="41" height="0.9"/><rect x="52" y="50" width="41" height="0.9"/><rect x="52" y="53" width="41" height="0.9"/><rect x="52" y="56" width="30" height="0.9"/></g>
<rect x="103" y="8" width="4" height="1.2" fill="#555"/><rect x="103" y="57" width="3" height="1.5" fill="#555"/>
</svg>
<!-- editor scrollbar -->
<div class="a" style="left:1001px;top:199px;width:10px;height:380px;background:#e3e3e3"></div>
<div class="a" style="left:1001px;top:201px;width:10px;height:11px;background:#fafafa"></div>
<svg class="a" style="left:1002px;top:204px" width="8" height="5"><path d="M1,4 L4,1 L7,4 Z" fill="#555"/></svg>
<div class="a" style="left:1001px;top:213px;width:10px;height:14px;background:#fff"></div>
<div class="a" style="left:1001px;top:536px;width:10px;height:10px;background:#fafafa"></div>
<svg class="a" style="left:1002px;top:537px" width="8" height="26"><path d="M1,1 L4,4 L7,1 Z" fill="#555"/><path d="M1,13 L4,10 L7,13 M1,15 L4,18 L7,15" fill="none" stroke="#666" stroke-width="1"/><path d="M1,21 L4,24 L7,21 M1,23 L4,26 L7,23" fill="none" stroke="#666" stroke-width="1"/></svg>
<div class="t" style="left:172px;top:585px;font-size:9.5px;color:#555">Заметки к слайду</div>
<!-- status bar -->
<div class="t" style="left:10px;top:605px;font-size:7.5px;color:#777">Слайд 1 из 11</div>
<svg class="a" style="left:62px;top:604px" width="10" height="9"><rect x="1" y="1" width="7" height="7" fill="none" stroke="#888" stroke-width="0.8"/><path d="M3,6 L8,2" stroke="#888" stroke-width="0.8"/></svg>
<div class="t" style="left:81px;top:605px;font-size:7.5px;color:#777">русский</div>
<svg class="a" style="left:693px;top:604px" width="10" height="9"><path d="M2,8 L5,2 L8,8 Z" fill="none" stroke="#888" stroke-width="0.9"/></svg>
<div class="t" style="left:705px;top:605px;font-size:7.5px;color:#777">Заметки</div>
<svg class="a" style="left:739px;top:604px" width="10" height="9"><path d="M1,1 H9 V6 H4 L2,8 V6 H1 Z" fill="#777"/></svg>
<div class="t" style="left:750px;top:605px;font-size:7.5px;color:#777">Примечания</div>
<div class="a" style="left:801px;top:603px;width:21px;height:12px;background:#d6d6d6"></div>
<svg class="a" style="left:805px;top:604px" width="200" height="11" viewBox="805 604 200 11"><g fill="none" stroke="#888" stroke-width="0.9"><rect x="807" y="605.5" width="8" height="7"/><path d="M809,605.5 V612.5"/><rect x="834.5" y="605.5" width="9" height="7"/><path d="M839,605.5 V612.5 M834.5,609 H843.5"/><rect x="862" y="605.5" width="8" height="7"/><path d="M864,607 H868"/><path d="M877,605.5 H885 M881,605.5 V612.5 M878,612.5 H884"/>
<path d="M890,609.5 H895"/><path d="M897,609.5 H960" stroke="#bbb"/><path d="M963,609.5 H970 M966.5,606 V613"/><rect x="998.5" y="605.5" width="8" height="7"/></g><rect x="911" y="605" width="3" height="9" fill="#666"/></svg>
<div class="t" style="left:977px;top:605px;font-size:7.5px;color:#777">32%</div>
<!-- slide -->
<div class="a" style="left:257px;top:208px;width:650px;height:366px;background:#f5efe6;box-shadow:0 0 0 1px #dcdad6"></div>

<!-- slide content -->
<svg class="a" style="left:290px;top:240px" width="36" height="34" viewBox="0 0 36 34">
<rect x="2.5" y="10" width="10" height="22.5" rx="2" fill="#f3d44c"/>
<rect x="11" y="4.8" width="11" height="27.7" rx="2" fill="#eba53b"/>
<rect x="21" y="1" width="13" height="31.5" rx="2" fill="#d95a2c"/>
<polyline points="6,26 14,18 21,23 31,12" fill="none" stroke="#fbe9d3" stroke-width="1.6"/>
<polygon points="32,10 27,11.5 31,15.5" fill="#fbe9d3"/>
</svg>
<div class="a" style="left:331px;top:246px;width:317px;height:179px;background:#eea43b"></div>
<div class="a" id="ttl" style="white-space:nowrap;left:338px;top:251.4px;width:340px;font-family:'Liberation Serif',serif;font-weight:bold;font-size:13.6px;line-height:13.4px;color:#2e1d0e;-webkit-text-stroke:0.05px #2e1d0e;transform-origin:0 0;transform:scaleX(0.876)">ВПРОВАДЖЕННЯ ДИЗАЙН — МЕНЕДЖМЕНТУ НА<br>ДЕННОМУ ВІДДІЛЕННІ «ЕЛЕКТРОЕНЕРГЕТИКИ,<br>ЕЛЕКТРОТЕХНІКИ ТА ЕЛЕКТРОМЕХАНІКИ,<br>ГОТЕЛЬНО–РЕСТОРАННОЇ СПРАВИ»<br>&nbsp;ВСП «ФАХОВОГО КОЛЕДЖУ ВИМІРЮВАНЬ<br>ДЕРЖАВНОГО УНІВЕРСИТЕТУ ІНТЕЛЕКТУАЛЬНИХ<br>ТЕХНОЛОГІЙ І ЗВ’ЯЗКУ» ДЛЯ ПОКРАЩЕННЯ<br>ОСВІТНЬОГО ПРОЦЕСУ, ЗАСТОСУВАННЯ<br>ІННОВАЦІЙ МАРКЕТИНГОВОГО УПРАВЛІННЯ ТА<br>ПРОГНОЗУВАННЯ ПОПИТУ ДЛЯ ЗДОБУВАЧІВ<br>ОСВІТНІХ ПОСЛУГ</div>
<div class="a" style="left:687px;top:200px;width:153px;height:190px;background:#d65f2d"></div>
<div class="a" style="left:687px;top:390px;width:153px;height:187px;background:#f0a33b"></div>
<svg class="a" style="left:620px;top:240px" width="280" height="275" viewBox="620 240 280 275">
<defs>
<clipPath id="cq1"><path d="M775,395 L634,395 A141,141 0 0 1 775,254 Z"/></clipPath>
<clipPath id="cq3"><path d="M756,369 L888,369 A132,132 0 0 1 756,501 Z"/></clipPath>
<filter id="sb"><feGaussianBlur stdDeviation="1.2"/></filter>
<filter id="sb2"><feGaussianBlur stdDeviation="3"/></filter>
<linearGradient id="sky" x1="0" y1="0" x2="0" y2="1">
<stop offset="0" stop-color="#8d97a6"/><stop offset="0.25" stop-color="#a9a8aa"/><stop offset="0.45" stop-color="#c9b39c"/><stop offset="0.55" stop-color="#d7ae82"/><stop offset="1" stop-color="#c9a27a"/>
</linearGradient>
<linearGradient id="tbl" x1="0" y1="0" x2="1" y2="1">
<stop offset="0" stop-color="#b59e88"/><stop offset="1" stop-color="#d2c0ae"/>
</linearGradient>
</defs>
<g clip-path="url(#cq1)">
<rect x="630" y="250" width="150" height="150" fill="url(#tbl)"/>
<g filter="url(#sb2)">
<rect x="630" y="250" width="150" height="60" fill="#a7adb0"/>
<rect x="740" y="250" width="40" height="40" fill="#e4e5e8"/>
<path d="M630,300 L690,290 L700,330 L630,345 Z" fill="#c0b2a2"/>
</g>
<g filter="url(#sb)">
<path d="M662,262 L744,254 L744,302 L668,306 Z" fill="#9ea6a9"/><path d="M744,254 V302" stroke="#333" stroke-width="1"/>
<g stroke="#3f7f8a" stroke-width="1.8"><path d="M710,299 V275 M716,299 V272 M722,299 V273 M728,299 V270 M734,299 V268 M740,299 V266"/></g>
<circle cx="698" cy="276" r="4" fill="#7a8488"/>
<path d="M660,310 L705,296 L718,318 L668,336 Z" fill="#6a6c70"/>
<path d="M666,312 L698,302 L704,310 L672,320 Z" fill="#8e9296"/>
<g fill="#cfd2d4"><rect x="676" y="322" width="3" height="2"/><rect x="683" y="319" width="3" height="2"/><rect x="690" y="317" width="3" height="2"/><rect x="679" y="327" width="3" height="2"/><rect x="686" y="324" width="3" height="2"/><rect x="693" y="322" width="3" height="2"/></g>
<path d="M712,310 L752,268 L775,266 L775,345 L745,345 Z" fill="#c8ccd0"/>
<path d="M712,310 L745,345 L775,345" fill="none" stroke="#555" stroke-width="1.2"/>
<circle cx="737" cy="315" r="5" fill="#9aa6aa"/><rect x="745" y="318" width="6" height="4" fill="#7090a0"/>
<path d="M752,265 Q770,255 775,258 V290 Q765,285 755,280 Z" fill="#d6b09a"/>
<path d="M760,300 Q775,295 775,305 V330 Q765,325 760,315 Z" fill="#c9a088"/>
<path d="M640,348 L680,340 L690,360 L645,368 Z" fill="#8f9295"/>
<path d="M634,372 L700,365 L705,395 L634,395 Z" fill="#dde2e6"/>
<path d="M650,336 Q660,325 672,335 L668,345 Q655,345 650,336 Z" fill="#caa892"/>
</g>
</g>
<path d="M775,369 L775,266 A103,103 0 0 1 878,369 Z" fill="#f7d557" stroke="#3a2a1a" stroke-width="0.8"/>
<g clip-path="url(#cq3)">
<rect x="750" y="365" width="140" height="140" fill="url(#sky)"/>
<g filter="url(#sb2)"><ellipse cx="835" cy="392" rx="40" ry="5" fill="#c9ccd2" opacity="0.7"/><ellipse cx="800" cy="380" rx="35" ry="9" fill="#8f97a5" opacity="0.6"/><ellipse cx="860" cy="405" rx="30" ry="6" fill="#9aa0aa" opacity="0.5"/><ellipse cx="800" cy="418" rx="50" ry="6" fill="#e0b080" opacity="0.6"/></g>
<g filter="url(#sb)">
<path d="M756,428 H764 V420 H772 V430 H782 V426 H790 V434 H798 V415 H803 V418 H807 V430 H815 V424 H822 V436 H832 V428 H840 V440 H852 V432 H866 V436 H880 V438 H890 V505 H756 Z" fill="#56575c"/>
<rect x="795" y="400" width="5" height="40" fill="#4c4d52"/><path d="M796,400 L797.5,394 L799,400 Z" fill="#4c4d52"/>
<rect x="812" y="408" width="6" height="40" fill="#505156"/><path d="M813,408 L815,401 L817,408 Z" fill="#505156"/>
<rect x="758" y="425" width="8" height="80" fill="#3a3b40"/>
<rect x="766" y="432" width="18" height="73" fill="#44454a"/>
<rect x="784" y="440" width="12" height="65" fill="#6e6e70"/>
<rect x="800" y="450" width="24" height="55" fill="#5f6062"/>
<rect x="832" y="435" width="12" height="60" fill="#8d8a86"/><rect x="844" y="428" width="20" height="60" fill="#46474c"/><rect x="864" y="436" width="12" height="50" fill="#777"/>
<g fill="#c2bbb0" opacity="0.55"><rect x="767" y="440" width="16" height="1"/><rect x="767" y="447" width="16" height="1"/><rect x="767" y="454" width="16" height="1"/><rect x="767" y="461" width="16" height="1"/><rect x="767" y="468" width="16" height="1"/><rect x="767" y="475" width="16" height="1"/><rect x="767" y="482" width="16" height="1"/><rect x="833" y="442" width="10" height="1"/><rect x="833" y="449" width="10" height="1"/><rect x="833" y="456" width="10" height="1"/><rect x="833" y="463" width="10" height="1"/><rect x="845" y="438" width="18" height="1"/><rect x="845" y="446" width="18" height="1"/><rect x="845" y="454" width="18" height="1"/></g>
</g>
</g>
</g>
<path d="M756,395 L756,503 A108,108 0 0 1 648,395 Z" fill="#d65f2d" stroke="#3a2a1a" stroke-width="0.8"/>
<circle cx="763" cy="383" r="37" fill="#f6eee4"/>
<circle cx="760" cy="380" r="9.5" fill="none" stroke="#111" stroke-width="3.6"/>
<line x1="767" y1="387" x2="776" y2="396" stroke="#111" stroke-width="4" stroke-linecap="round"/>
<path d="M702,442 L702,452 L705,450 L707,455 L709,454 L707,449 L711,449 Z" fill="#fff" stroke="#333" stroke-width="0.7"/>
</svg>
<div class="a" style="left:260px;top:496px;width:434px;text-align:center;font-family:'Liberation Sans',sans-serif;font-weight:bold;font-size:9.6px;line-height:15.6px;color:#1f1f1f;-webkit-text-stroke:0.15px #1f1f1f;text-decoration:underline;text-decoration-color:rgba(230,150,150,0.3);text-underline-offset:2.5px;text-decoration-thickness:1px">Квасикова Ганна Сергіївна<br>кандидат фізико-математичних наук, спеціаліст вищої категорії фізики<br>та математики, завідувач денного відділення «Електроенергетики,<br>електротехніки та електромеханіки, готельно-ресторанної справи»</div>
<!-- taskbar -->
<div class="a" style="left:6px;top:616px;width:1002px;height:25px;background:#080808"></div>
<svg class="a" style="left:5px;top:617px" width="1003" height="24" viewBox="5 616 1003 24"><path d="M16,623.5 L20.5,623 V628.3 H16 Z M21.5,622.8 L26.5,622.2 V628.3 H21.5 Z M16,629.2 H20.5 V634.5 L16,634 Z M21.5,629.2 H26.5 V635.3 L21.5,634.7 Z" fill="#f0f0f0"/><circle cx="55" cy="626.5" r="3.8" fill="none" stroke="#e8e8e8" stroke-width="1.2"/><path d="M52.3,629.2 L48.5,633" stroke="#e8e8e8" stroke-width="1.3"/><rect x="81" y="623.5" width="8" height="10" rx="1" fill="none" stroke="#e8e8e8" stroke-width="1.1"/><path d="M79,625 V632 M91,625 V632" stroke="#e8e8e8" stroke-width="1"/><rect x="170" y="639" width="26" height="1.6" fill="#8aa9cf"/><rect x="494" y="639" width="27" height="1.6" fill="#8aa9cf"/><rect x="527" y="639" width="26" height="1.6" fill="#8aa9cf"/><rect x="559" y="639" width="26" height="1.6" fill="#8aa9cf"/><rect x="592.5" y="639" width="26.5" height="1.6" fill="#8aa9cf"/><rect x="232" y="616" width="31.5" height="25" fill="#3a3a3a"/><rect x="232" y="639" width="31.5" height="1.6" fill="#9db8dc"/><rect x="110" y="622" width="14" height="12" rx="1" fill="#7cb86a"/><rect x="115" y="620" width="9" height="9" rx="1" fill="#f0a040"/><circle cx="150" cy="628" r="7" fill="#4bab3b"/><path d="M147,624 V629 Q147,632 150,632 Q153,632 153,629 V624" fill="none" stroke="#fff" stroke-width="1.6"/><rect x="175" y="621" width="14" height="14" rx="1.5" fill="#2b579a"/><text x="176.5" y="632.5" font-size="9" font-weight="bold" fill="#fff" font-family="Liberation Sans">W</text><rect x="207" y="621" width="14" height="14" rx="1.5" fill="#217346"/><text x="209" y="632.5" font-size="9" font-weight="bold" fill="#fff" font-family="Liberation Sans">X</text><rect x="217" y="624" width="3" height="8" fill="#fff" opacity="0.7"/><rect x="240" y="621" width="14" height="14" rx="1.5" fill="#d24726"/><text x="241" y="632.5" font-size="9" font-weight="bold" fill="#fff" font-family="Liberation Sans">P</text><rect x="249" y="624" width="3" height="8" fill="#fff" opacity="0.7"/><rect x="272" y="621" width="14" height="14" rx="1" fill="#2a0a3a" stroke="#b36bff" stroke-width="1"/><text x="273.5" y="631.5" font-size="8" fill="#d9a6ff" font-family="Liberation Sans">Pr</text><rect x="305" y="621" width="14" height="14" rx="1" fill="#001a33" stroke="#31a8ff" stroke-width="1"/><text x="306.5" y="631.5" font-size="8" fill="#31a8ff" font-family="Liberation Sans">Ps</text><rect x="338" y="621" width="14" height="14" rx="1" fill="#2b1300" stroke="#ff9a00" stroke-width="1"/><text x="340" y="631.5" font-size="8" fill="#ff9a00" font-family="Liberation Sans">Ai</text><rect x="370" y="621" width="14" height="14" rx="1" fill="#00261f" stroke="#2fe0b5" stroke-width="1"/><text x="371" y="631.5" font-size="8" fill="#2fe0b5" font-family="Liberation Sans">Au</text><path d="M402,624 H408 L409.5,626 H416 V634 H402 Z" fill="#f4c542"/><rect x="402" y="627" width="14" height="7" fill="#e8b730"/><rect x="404" y="629" width="10" height="3" fill="#3b8fd9"/><ellipse cx="442" cy="628" rx="6" ry="7" fill="none" stroke="#e0202a" stroke-width="3"/><circle cx="474" cy="628.5" r="7" fill="#ff7a1a"/><circle cx="475" cy="629.5" r="4" fill="#8a3bd0"/><path d="M468,625 Q472,620 479,622 Q474,623 473,627" fill="#ffcf33"/><circle cx="507" cy="628" r="7" fill="#db4437"/><path d="M507,628 L513,631.5 A7,7 0 0 1 501,631.5 Z" fill="#0f9d58"/><path d="M507,628 L501,631.5 A7,7 0 0 1 507,621 Z" fill="#f4b400"/><circle cx="507" cy="628" r="3" fill="#4285f4" stroke="#fff" stroke-width="1"/><circle cx="540" cy="627.5" r="7" fill="#7d5cd6"/><path d="M537,624 Q536,630 541,631 Q544,631 544,628" fill="none" stroke="#fff" stroke-width="1.4"/><circle cx="545" cy="632" r="4" fill="#e0394a"/><circle cx="572" cy="628" r="7" fill="#2d8cff"/><rect x="567.5" y="626" width="7" height="4.5" rx="1" fill="#fff"/><path d="M575,627.5 L577,626 V630.5 L575,629 Z" fill="#fff"/><path d="M599,630 Q598,621 606,621 Q612,621 612,627 H602 Q602,632 609,632 Q611,632 612,631 V634 Q610,635 607,635 Q599,635 599,630 Z M602,625 H608.5 Q608,623 605.5,623 Q603,623 602,625 Z" fill="#2f8ee6"/><g transform="translate(0,-1.5)"><text x="826" y="632" font-size="8" fill="#ddd" font-family="Liberation Sans">RU</text><path d="M850,631 L853.5,627.5 L857,631" fill="none" stroke="#ddd" stroke-width="1"/><circle cx="867" cy="628.5" r="5" fill="#8e5cd9"/><path d="M865,626 Q865,631 869,631" fill="none" stroke="#fff" stroke-width="1"/><rect x="881" y="625" width="11" height="7" fill="#ddd"/><rect x="880" y="623" width="4" height="3" fill="#ddd"/><path d="M896,626.5 H898.5 L901.5,624 V633 L898.5,630.5 H896 Z" fill="#ddd"/><path d="M903,626 Q905,628.5 903,631 M905,624.5 Q908,628.5 905,632.5" fill="none" stroke="#ddd" stroke-width="0.9"/><rect x="912.5" y="624.5" width="9" height="7" fill="none" stroke="#ddd" stroke-width="1"/><path d="M911,633.5 H919" stroke="#ddd"/><path d="M930,633 L936,625 Q938,623 939,625 L934,632 Z" fill="none" stroke="#ddd" stroke-width="1"/><rect x="945.5" y="623.5" width="15" height="10" fill="none" stroke="#ddd" stroke-width="0.9"/><path d="M947,630.5 H959 M947,627 H959" stroke="#ddd" stroke-width="0.6" stroke-dasharray="1,1"/></g><text x="972" y="625" font-size="7.2" fill="#e6e6e6" font-family="Liberation Sans">14:48</text><text x="967" y="637" font-size="7.2" fill="#e6e6e6" font-family="Liberation Sans">23.05.2024</text></svg>
<!-- zoom UI -->
<svg class="a" style="left:10px;top:10px" width="18" height="18" viewBox="0 0 18 18"><path d="M9,1.5 L15,3.8 V8.5 Q15,13.5 9,16.5 Q3,13.5 3,8.5 V3.8 Z" fill="#3ad769"/><path d="M6,9 L8.3,11.2 L12.3,6.8" fill="none" stroke="#1b1b1b" stroke-width="1.6"/></svg>
<div class="a" style="left:1224px;top:8px;width:47px;height:22px;background:#222;border-radius:3px"></div>
<svg class="a" style="left:1231px;top:12px" width="12" height="12" viewBox="0 0 12 12"><rect x="1" y="1.5" width="5.5" height="9" fill="#e6e6e6"/><path d="M7.5,6 H11 M9.5,4.5 L11,6 L9.5,7.5" fill="none" stroke="#e6e6e6" stroke-width="1.1"/></svg>
<div class="t" style="left:1246px;top:13px;font-size:11px;color:#e6e6e6">Вид</div>
<!-- activation -->
<div class="t" style="left:944px;top:592px;font-size:18.5px;color:rgba(200,200,200,0.55)">Активация Windows</div>
<div class="t" style="left:944px;top:617px;font-size:14px;color:rgba(200,200,200,0.55)">Чтобы активировать Windows, перейдите к</div>
<div class="t" style="left:944px;top:635px;font-size:14.2px;color:rgba(200,200,200,0.55)">параметрам компьютера.</div>
<!-- video -->
<div class="a" style="left:1022px;top:288px;width:253px;height:143px;overflow:hidden;background:#e6e6e6">
<svg class="a" style="left:0;top:0" width="253" height="143" viewBox="0 0 253 143">
<defs><filter id="bl" x="-20%" y="-20%" width="140%" height="140%"><feGaussianBlur stdDeviation="5"/></filter><filter id="bl2"><feGaussianBlur stdDeviation="2"/></filter></defs>
<rect width="253" height="143" fill="#e9e9e9"/>
<g filter="url(#bl)">
<rect x="-10" y="-10" width="280" height="170" fill="#cdbdb9"/>
<path d="M-10,-10 H40 Q30,40 35,80 Q38,120 30,160 H-10 Z" fill="#efeeee"/>
<path d="M195,-10 H262 V160 H215 Z" fill="#d9d5d1"/>
<path d="M214,-10 H243 V160 H222 Z" fill="#c78f5f"/>
<path d="M243,20 H262 V160 H243 Z" fill="#aab8b8"/>
<path d="M150,-10 H198 Q205,60 235,160 H165 Q175,80 150,-10 Z" fill="#3b312d"/>
<path d="M40,-10 H150 Q165,30 160,60 Q100,50 42,62 Z" fill="#d8cdcb"/>
<path d="M16,-10 H40 Q34,10 36,34 L22,36 Z" fill="#5e5652"/>
<path d="M60,100 Q90,110 110,143 H40 Q45,115 60,100 Z" fill="#bfaca8"/>
</g>
<g filter="url(#bl2)">
<path d="M30,78 Q48,72 64,78" fill="none" stroke="#8a7874" stroke-width="3"/>
<path d="M90,73 Q112,66 134,72" fill="none" stroke="#8a7874" stroke-width="3"/>
<ellipse cx="51" cy="90" rx="13" ry="5.5" fill="#65646a"/>
<ellipse cx="116" cy="87" rx="13" ry="5" fill="#6a6e76"/>
<ellipse cx="53" cy="90" rx="4.5" ry="3.5" fill="#3f5670"/>
<ellipse cx="118" cy="87" rx="4.5" ry="3.5" fill="#4a6c84"/>
<ellipse cx="187" cy="54" rx="5" ry="7" fill="#b5aba6"/>
<circle cx="175" cy="105" r="2.5" fill="#c9c0b8"/>
<path d="M64,96 Q70,115 66,130 Q58,120 56,100 Z" fill="#a8958f" opacity="0.7"/>
</g>
</svg>
 <div class="a" style="left:0;top:125px;width:129px;height:18px;background:rgba(40,40,40,0.72)"></div>
 <svg class="a" style="left:4px;top:129px" width="14" height="11"><rect x="1" y="7" width="2" height="3" fill="#fff"/><rect x="4" y="5" width="2" height="5" fill="#fff"/><rect x="7" y="3" width="2" height="7" fill="#fff"/><rect x="10" y="1" width="2" height="9" fill="#fff"/></svg>
 <div class="t" style="left:21px;top:129px;font-size:11px;color:#f0f0f0;transform:scaleX(0.95);transform-origin:0 0">АННА КВАСИКОВА</div>
</div>
<div class="a" style="left:1015px;top:347px;width:1.2px;height:24px;background:#9a9a9a"></div>
<div class="a" style="left:1018px;top:347px;width:1.2px;height:24px;background:#9a9a9a"></div>

<!-- zoom bottom toolbar -->
<svg class="a" style="left:0;top:660px" width="1280" height="59" viewBox="0 660 1280 59">
<g fill="#cfcfcf">
<rect x="44" y="673" width="9" height="15" rx="4.5"/><path d="M40,682 Q40,692 48.5,692 Q57,692 57,682" fill="none" stroke="#cfcfcf" stroke-width="1.8"/><rect x="47.5" y="692" width="2" height="4"/><rect x="43" y="695" width="11" height="1.8"/>
</g>
<path d="M39,697 L59,673" stroke="#e0463e" stroke-width="2"/>
<path d="M80,687 L83.5,683.5 L87,687" fill="none" stroke="#cfcfcf" stroke-width="1.4"/>
<rect x="138" y="678" width="15" height="14" rx="2" fill="#cfcfcf"/><path d="M154,682.5 L161,678.5 V691.5 L154,687.5 Z" fill="#cfcfcf"/>
<path d="M190,687 L193.5,683.5 L197,687" fill="none" stroke="#cfcfcf" stroke-width="1.4"/>
<circle cx="328" cy="680.5" r="4" fill="#cfcfcf"/><path d="M320,693 Q320,686 328,686 Q336,686 336,693 Z" fill="#cfcfcf"/><circle cx="339" cy="681.5" r="3.5" fill="#cfcfcf"/><path d="M334,687 Q340,685 344,688 Q345,690 345,693 H338 Z" fill="#cfcfcf"/>
<path d="M378,687 L381.5,683.5 L385,687" fill="none" stroke="#cfcfcf" stroke-width="1.4"/>
<path d="M428,676 H444 Q446,676 446,678 V688 Q446,690 444,690 H433 L429,694 V690 H428 Q426,690 426,688 V678 Q426,676 428,676 Z" fill="#cfcfcf"/>
<path d="M463,687 L466.5,683.5 L470,687" fill="none" stroke="#cfcfcf" stroke-width="1.4"/>
<rect x="531" y="676" width="23" height="18" rx="3" fill="#22c55e"/><path d="M542.5,690 V681 M538.5,684.5 L542.5,680.5 L546.5,684.5" fill="none" stroke="#0d2a16" stroke-width="1.8"/>
<path d="M639,675 H650 L655,680 V693 Q655,695 653,695 H639 Q637,695 637,693 V677 Q637,675 639,675 Z" fill="#cfcfcf"/><path d="M645,680 Q645.8,684.5 650,685.5 Q645.8,686.5 645,691 Q644.2,686.5 640,685.5 Q644.2,684.5 645,680 Z" fill="#1b1b1b"/><path d="M650,675 V680 H655" fill="#1b1b1b" stroke="#1b1b1b" stroke-width="0.8"/>
<circle cx="720.5" cy="685" r="9.5" fill="none" stroke="#cfcfcf" stroke-width="1.8"/><circle cx="720.5" cy="685" r="6.8" fill="#cfcfcf"/>
<circle cx="795" cy="686" r="9" fill="#cfcfcf"/><circle cx="792" cy="684" r="1.2" fill="#1b1b1b"/><circle cx="798" cy="684" r="1.2" fill="#1b1b1b"/><path d="M791,688.5 Q795,692 799,688.5" fill="none" stroke="#1b1b1b" stroke-width="1.3"/><path d="M802,674 V680 M799,677 H805" stroke="#cfcfcf" stroke-width="1.5"/>
<path d="M818,687 L821.5,683.5 L825,687" fill="none" stroke="#cfcfcf" stroke-width="1.4"/>
<g fill="none" stroke="#c8c8c8" stroke-width="1.7"><path d="M867,683 V680 Q867,677 870,677 H872 M867,687 V690 Q867,693 870,693 H872 M874,693 H877 Q880,693 880,690 V687"/><circle cx="877" cy="680" r="2.6"/><circle cx="870" cy="690" r="0.1"/></g>
<rect x="962.5" y="676.5" width="18" height="13" rx="2" fill="none" stroke="#cfcfcf" stroke-width="1.6"/><rect x="970" y="688" width="11" height="4" rx="2" fill="#cfcfcf"/>
<rect x="1067" y="675" width="13" height="17" rx="2" fill="none" stroke="#cfcfcf" stroke-width="1.6"/><path d="M1070,679.5 H1077 M1070,683 H1077 M1070,686.5 H1075" stroke="#cfcfcf" stroke-width="1.3"/><rect x="1072" y="691" width="10" height="3.5" rx="1.5" fill="#cfcfcf"/>
</svg>
<div class="t" style="left:9px;top:701.5px;font-size:11.5px;color:#d6d6d6">Включить звук</div>
<div class="t" style="left:102px;top:701.5px;font-size:11.5px;color:#d6d6d6">Остановить видео</div>
<div class="t" style="left:347px;top:677px;font-size:11px;color:#d6d6d6">29</div>
<div class="t" style="left:306px;top:701.5px;font-size:11.5px;color:#d6d6d6">Участники</div>
<div class="t" style="left:426px;top:701.5px;font-size:11.5px;color:#d6d6d6">Чат</div>
<div class="t" style="left:485px;top:701.5px;font-size:11.5px;color:#2ed169">Демонстрация экрана</div>
<div class="t" style="left:627px;top:701.5px;font-size:11.5px;color:#d6d6d6">Сводка</div>
<div class="t" style="left:701px;top:701.5px;font-size:11.5px;color:#d6d6d6">Запись</div>
<div class="t" style="left:774px;top:701.5px;font-size:11.5px;color:#d6d6d6">Реакции</div>
<div class="t" style="left:840px;top:701.5px;font-size:11.5px;color:#d6d6d6">Приложения</div>
<div class="t" style="left:923px;top:701.5px;font-size:11.5px;color:#d6d6d6">Доски сообщений</div>
<div class="t" style="left:1039px;top:701.5px;font-size:11.5px;color:#d6d6d6">Примечания</div>
<div class="a" style="left:1211px;top:681px;width:58px;height:25.5px;background:#c9232a;border-radius:5px"></div>
<div class="t" style="left:1221px;top:688px;font-size:11px;font-weight:bold;color:#fff">Выйти</div>
</body></html>
